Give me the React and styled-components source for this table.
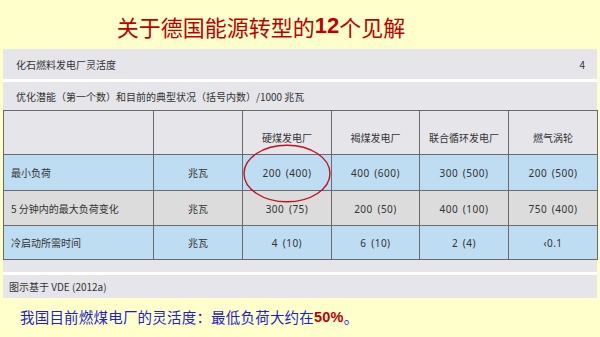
import styled, { createGlobalStyle } from 'styled-components';

const GlobalStyle = createGlobalStyle`
  html, body {
    margin: 0;
    padding: 0;
    background: #ffffcc;
  }
  body {
    font-family: "Noto Sans CJK SC", "Noto Sans", sans-serif;
  }
`;

const Slide = styled.div`
  width: 600px;
  height: 337px;
  background: #ffffcc;
  display: flex;
  flex-direction: column;
  overflow: hidden;
`;

const Title = styled.h1`
  margin: 0;
  height: 49px;
  display: flex;
  align-items: center;
  justify-content: center;
  padding-right: 78px;
  padding-top: 2px;
  box-sizing: border-box;
  font-family: "Noto Sans CJK SC", sans-serif;
  font-weight: 400;
  font-size: 22px;
  color: #c00000;
`;

const Num = styled.span`
  font-family: "Liberation Sans", Arial, sans-serif;
  font-weight: 700;
  color: ${p => p.color || 'inherit'};
`;

const Panel = styled.div`
  margin: 0 3px;
  display: flex;
  flex-direction: column;
  gap: 3px;
  background: #ffffff;
`;

const Section = styled.div`
  background: #e5e5ea;
  height: ${p => p.h}px;
  display: flex;
  align-items: center;
  justify-content: space-between;
  padding: 0 ${p => p.pr || 12}px 0 ${p => p.pl || 13}px;
  box-sizing: border-box;
  font-size: 10px;
  color: #333;
`;

const Block = styled.div`
  background: #e5e5ea;
  display: flex;
  flex-direction: column;
  padding-bottom: 12px;
`;

const Table = styled.table`
  border-collapse: collapse;
  width: 594px;
  table-layout: fixed;
  font-size: 10px;
  color: #333;
`;

const Row = styled.tr`
  background: ${p => p.bg};
  height: ${p => p.h}px;
`;

const Cell = styled.td`
  border: 1px solid #6a6a6a;
  padding: 0;
  text-align: ${p => (p.left ? 'left' : 'center')};
  padding-left: ${p => (p.left ? '7px' : '0')};
  vertical-align: ${p => p.valign || 'middle'};
  padding-bottom: ${p => (p.valign === 'bottom' ? '9px' : '0')};
  position: relative;
  white-space: nowrap;
`;

const Value = styled.span`
  font-family: "Noto Sans", sans-serif;
  letter-spacing: 0.5px;
  word-spacing: 1.5px;
`;

const Ring = styled.svg`
  position: absolute;
  left: 0px;
  top: -11px;
  pointer-events: none;
`;

const Note = styled.div`
  flex: 1;
  display: flex;
  align-items: center;
  padding: 0 0 2px 20px;
  font-size: 14.5px;
  color: #1f1fd0;
  letter-spacing: 0.2px;
`;

const cols = [150, 89, 89, 88, 89, 89];

const rows = [
  { label: '最小负荷', unit: '兆瓦', vals: ['200 (400)', '400 (600)', '300 (500)', '200 (500)'], bg: '#bedcf2', h: 36 },
  { label: '5 分钟内的最大负荷变化', unit: '兆瓦', vals: ['300 (75)', '200 (50)', '400 (100)', '750 (400)'], bg: '#dcdcdc', h: 35 },
  { label: '冷启动所需时间', unit: '兆瓦', vals: ['4 (10)', '6 (10)', '2 (4)', '‹0.1'], bg: '#bedcf2', h: 34 },
];

const heads = ['硬煤发电厂', '褐煤发电厂', '联合循环发电厂', '燃气涡轮'];

export default function App() {
  return (
    <Slide>
      <GlobalStyle />
      <Title>
        关于德国能源转型的<Num>12</Num>个见解
      </Title>
      <Panel>
        <Section h={30}>
          <span>化石燃料发电厂灵活度</span>
          <span>4</span>
        </Section>
        <Block>
          <Section h={28}>
            <span>优化潜能（第一个数）和目前的典型状况（括号内数）/1000 兆瓦</span>
          </Section>
          <Table>
            <colgroup>
              {cols.map((w, i) => (
                <col key={i} style={{ width: w }} />
              ))}
            </colgroup>
            <tbody>
              <Row bg="#e5e5ea" h={44}>
                <Cell />
                <Cell />
                {heads.map(h => (
                  <Cell key={h} valign="bottom">{h}</Cell>
                ))}
              </Row>
              {rows.map((r, ri) => (
                <Row key={r.label} bg={r.bg} h={r.h}>
                  <Cell left>{r.label}</Cell>
                  <Cell>{r.unit}</Cell>
                  {r.vals.map((v, vi) => (
                    <Cell key={vi}>
                      <Value>{v}</Value>
                      {ri === 0 && vi === 0 && (
                        <Ring width="88" height="59" viewBox="0 0 88 59">
                          <ellipse cx="44" cy="29.5" rx="43" ry="28.3" fill="none" stroke="#c0121c" strokeWidth="1.4" />
                        </Ring>
                      )}
                    </Cell>
                  ))}
                </Row>
              ))}
            </tbody>
          </Table>
        </Block>
        <Section h={23} pl={6}>
          <span>图示基于 VDE (2012a)</span>
        </Section>
      </Panel>
      <Note>
        我国目前燃煤电厂的灵活度：最低负荷大约在<Num color="#c00000">50%</Num>。
      </Note>
    </Slide>
  );
}
